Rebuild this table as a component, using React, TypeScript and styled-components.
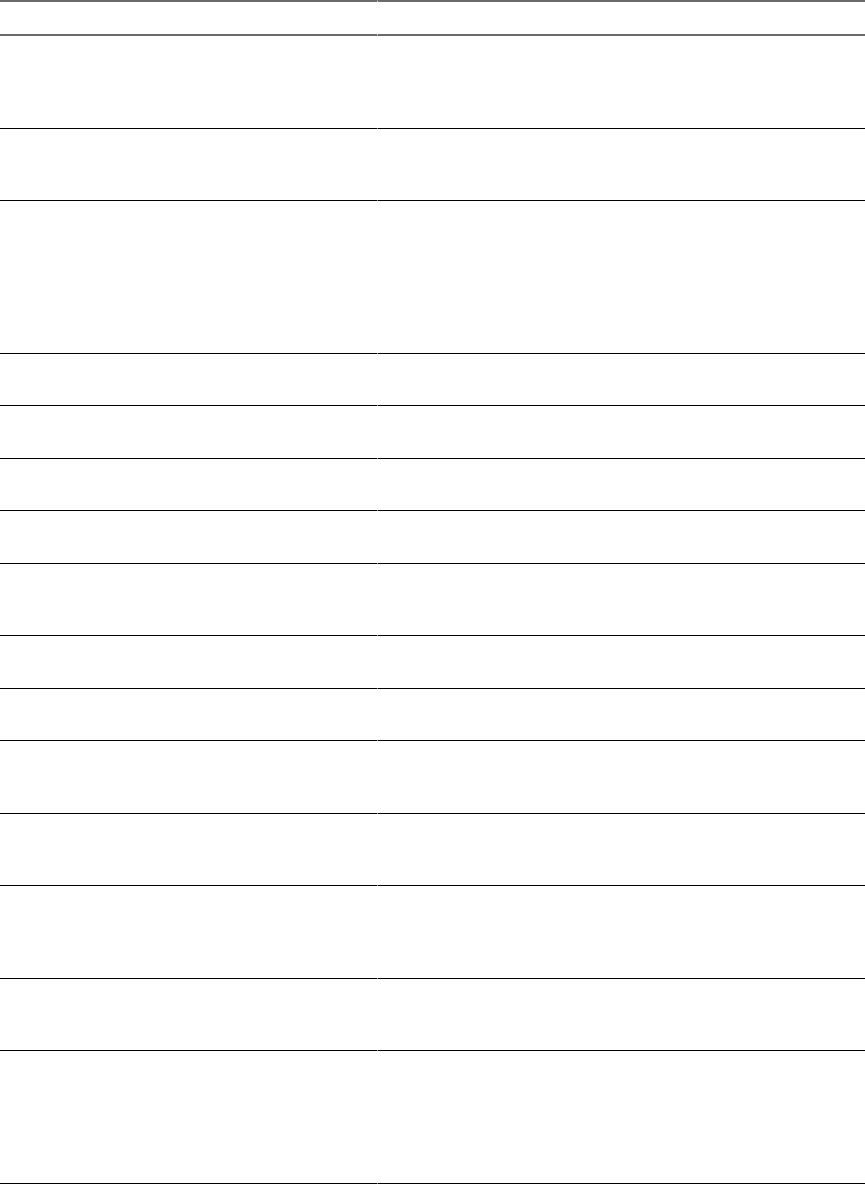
import styled, { createGlobalStyle } from 'styled-components';

const GlobalStyle = createGlobalStyle`
  html, body {
    margin: 0;
    padding: 0;
    background: #ffffff;
    font-family: 'Liberation Sans', Arial, sans-serif;
  }
`;

const Table = styled.div`
  display: flex;
  flex-direction: column;
  width: 865px;
`;

const HeadRow = styled.div`
  display: grid;
  grid-template-columns: 377px 1fr;
  height: 36px;
`;

const HeadCell = styled.div<{ $divider?: boolean }>`
  border-top: 2px solid #6a6a6a;
  border-bottom: 2px solid #6a6a6a;
  border-left: ${(p) => (p.$divider ? '1px solid #ffffff' : 'none')};
`;

const Row = styled.div<{ $height: number }>`
  display: grid;
  grid-template-columns: 377px 1fr;
  height: ${(p) => p.$height}px;
`;

const Cell = styled.div<{ $divider?: boolean }>`
  border-bottom: 1px solid #000000;
  border-left: ${(p) => (p.$divider ? '1px solid #ffffff' : 'none')};
`;

// heights include the 1px bottom rule
const ROW_HEIGHTS = [93, 72, 153, 52, 53, 52, 53, 72, 53, 52, 73, 72, 93, 72, 133];

export default function App() {
  return (
    <>
      <GlobalStyle />
      <Table>
        <HeadRow>
          <HeadCell />
          <HeadCell $divider />
        </HeadRow>
        {ROW_HEIGHTS.map((h, i) => (
          <Row key={i} $height={h}>
            <Cell />
            <Cell $divider />
          </Row>
        ))}
      </Table>
    </>
  );
}
